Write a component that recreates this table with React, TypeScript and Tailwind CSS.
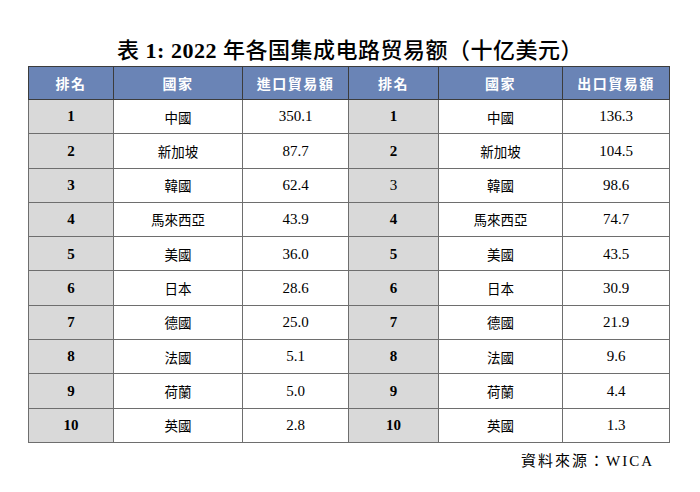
const rows = [
  { rank: 1, a: "中國", imp: "350.1", b: "中國", exp: "136.3" },
  { rank: 2, a: "新加坡", imp: "87.7", b: "新加坡", exp: "104.5" },
  { rank: 3, a: "韓國", imp: "62.4", b: "韓國", exp: "98.6" },
  { rank: 4, a: "馬來西亞", imp: "43.9", b: "馬來西亞", exp: "74.7" },
  { rank: 5, a: "美國", imp: "36.0", b: "美國", exp: "43.5" },
  { rank: 6, a: "日本", imp: "28.6", b: "日本", exp: "30.9" },
  { rank: 7, a: "德國", imp: "25.0", b: "德國", exp: "21.9" },
  { rank: 8, a: "法國", imp: "5.1", b: "法國", exp: "9.6" },
  { rank: 9, a: "荷蘭", imp: "5.0", b: "荷蘭", exp: "4.4" },
  { rank: 10, a: "英國", imp: "2.8", b: "英國", exp: "1.3" },
];

const serif = "font-['Liberation_Serif','Noto_Sans_CJK_TC',serif]";
const cjk = "font-['Noto_Sans_CJK_TC',sans-serif]";

export default function App() {
  return (
    <div className="h-[492px] w-[700px] bg-white pt-[37px] text-black">
      <h1 className={`${serif} text-center text-[22px] leading-[28px] font-medium tracking-[0.5px]`}>
        表 <span className="font-bold">1: 2022</span> 年各国集成电路贸易额（十亿美元）
      </h1>
      <table className="mt-[1px] ml-[28px] w-[641px] table-fixed border-collapse">
        <colgroup>
          <col className="w-[85px]" />
          <col className="w-[129px]" />
          <col className="w-[106px]" />
          <col className="w-[90px]" />
          <col className="w-[124px]" />
          <col className="w-[107px]" />
        </colgroup>
        <thead>
          <tr className={`${cjk} h-[33px] bg-[#6a84b6] text-[14px] font-bold text-white`}>
            {["排名", "國家", "進口貿易額", "排名", "國家", "出口貿易額"].map((h, i) => (
              <th key={i} className="border border-[#3c3c3c] p-0 tracking-[1.5px]">
                {h}
              </th>
            ))}
          </tr>
        </thead>
        <tbody>
          {rows.map((r) => (
            <tr key={r.rank} className="h-[34.3px]">
              <td className={`${serif} border border-[#6e6e6e] bg-[#d9d9d9] p-0 text-center text-[15px] font-bold`}>
                {r.rank}
              </td>
              <td className={`${cjk} border border-[#6e6e6e] p-0 text-center text-[13.5px]`}>{r.a}</td>
              <td className={`${serif} border border-[#6e6e6e] p-0 text-center text-[15px]`}>{r.imp}</td>
              <td
                className={`${serif} border border-[#6e6e6e] bg-[#d9d9d9] p-0 text-center text-[15px] ${
                  r.rank === 3 ? "font-normal" : "font-bold"
                }`}
              >
                {r.rank}
              </td>
              <td className={`${cjk} border border-[#6e6e6e] p-0 text-center text-[13.5px]`}>{r.b}</td>
              <td className={`${serif} border border-[#6e6e6e] p-0 text-center text-[15px]`}>{r.exp}</td>
            </tr>
          ))}
        </tbody>
      </table>
      <p className={`${serif} mt-[8px] mr-[46px] text-right text-[15px] leading-[20px] tracking-[2px]`}>
        資料來源：WICA
      </p>
    </div>
  );
}
